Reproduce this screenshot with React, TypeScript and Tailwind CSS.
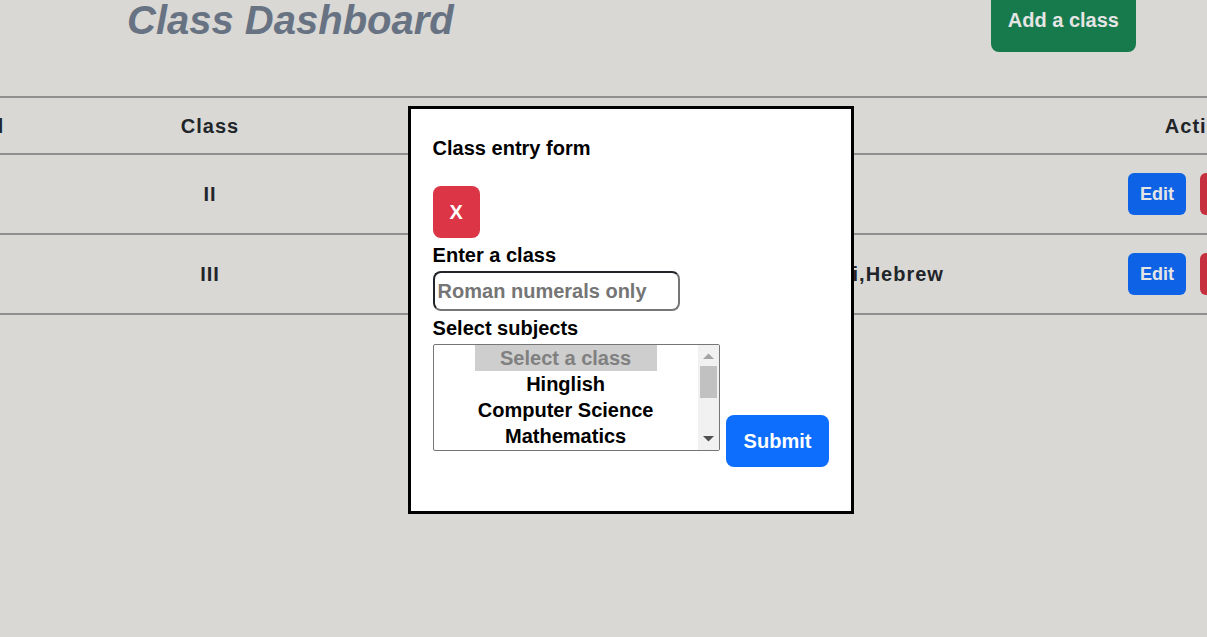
import React from "react";

const rows = [
  { id: "1", name: "II", subjects: "Hinglish" },
  { id: "2", name: "III", subjects: "English,French,Hindi,Hebrew" },
];

const subjects = [
  "Hinglish",
  "Computer Science",
  "Mathematics",
  "Tamil",
  "Hebrew",
  "Physics",
  "Chemistry",
  "Biology",
  "History",
  "Geography",
  "Economics",
];

function ClassTable() {
  return (
    <div className="flex justify-center">
      <table className="w-[calc(100%+240px)] shrink-0 table-fixed border-collapse text-center text-xl font-bold tracking-wider text-[#212529]">
        <colgroup>
          <col className="w-[188px]" />
          <col className="w-[284px]" />
          <col />
          <col className="w-[248px]" />
        </colgroup>
        <thead>
          <tr className="h-[57px] border-y-2 border-[#908e8f]">
            <th>Serial</th>
            <th>Class</th>
            <th className="pl-[152px]">Subjects</th>
            <th className="pl-1">Actions</th>
          </tr>
        </thead>
        <tbody>
          {rows.map((row) => (
            <tr key={row.id} className="h-20 border-b-2 border-[#908e8f]">
              <td>{row.id}</td>
              <td>{row.name}</td>
              <td className="pl-[152px] whitespace-nowrap">{row.subjects}</td>
              <td>
                <div className="flex justify-center gap-3.5 text-lg tracking-normal text-[#e5e5e5]">
                  <button type="button" className="rounded-md bg-[#0d62e5] px-3 py-[7px]">
                    Edit
                  </button>
                  <button type="button" className="rounded-md bg-[#c6303e] px-3 py-[7px]">
                    Delete
                  </button>
                </div>
              </td>
            </tr>
          ))}
        </tbody>
      </table>
    </div>
  );
}

function ScrollBar() {
  return (
    <div aria-hidden="true" className="flex w-[21px] flex-col items-center bg-[#f1f1f1]">
      <svg className="h-[21px] w-[21px]" viewBox="0 0 21 21">
        <path d="M5 14h11l-5.5-5.5z" fill="#a3a3a3" />
      </svg>
      <div className="h-8 w-[17px] bg-[#c1c1c1]" />
      <svg className="mt-auto h-[21px] w-[21px]" viewBox="0 0 21 21">
        <path d="M5 7h11l-5.5 5.5z" fill="#505050" />
      </svg>
    </div>
  );
}

function ClassForm() {
  return (
    <form
      role="dialog"
      aria-labelledby="form-title"
      onSubmit={(e) => e.preventDefault()}
      className="border-3 border-black bg-white px-[22px] pt-6 pb-11 text-xl leading-[30px] font-bold text-black"
    >
      <h2 id="form-title">Class entry form</h2>
      <button type="button" className="mt-[23px] block rounded-lg bg-[#dc3545] px-[17px] py-[11px] text-white">
        X
      </button>
      <label htmlFor="class-name" className="mt-0.5 block">
        Enter a class
      </label>
      <input
        id="class-name"
        type="text"
        placeholder="Roman numerals only"
        className="mt-px block h-10 w-[247px] rounded-lg border-2 border-t-[#212529] border-r-[#767676] border-b-[#767676] border-l-[#212529] px-[3px] placeholder:text-[#757575]"
      />
      <label htmlFor="subjects" className="mt-0.5 block">
        Select subjects
      </label>
      <div className="flex items-start gap-1.5">
        <div className="mt-px flex h-[107px] w-[287px] overflow-hidden rounded-xs border border-[#767676]">
          <select
            id="subjects"
            multiple
            size={4}
            defaultValue={[""]}
            className="min-w-0 flex-1 overflow-y-scroll px-[41px] text-center"
          >
            <option value="" disabled className="h-[26px] pt-0.5 font-bold">
              Select a class
            </option>
            {subjects.map((s) => (
              <option key={s} value={s} className="h-[26px] pt-0.5 font-bold">
                {s}
              </option>
            ))}
          </select>
          <ScrollBar />
        </div>
        <button type="submit" className="mt-[72px] rounded-lg bg-[#0d6efd] px-[18px] py-[11px] text-white">
          Submit
        </button>
      </div>
    </form>
  );
}

export default function App() {
  return (
    <div className="min-h-screen overflow-hidden bg-[#d9d8d4] font-['Liberation_Sans',sans-serif]">
      <header className="flex items-start justify-between pr-[71px] pb-11 pl-[127px]">
        <h1 className="text-[40px] leading-10 font-bold text-[#677283] italic">Class Dashboard</h1>
        <button
          type="button"
          className="rounded-b-lg bg-[#177a4c] px-[17px] pt-[5px] pb-[17px] text-xl leading-[30px] font-bold text-[#e5e5e5]"
        >
          Add a class
        </button>
      </header>
      <ClassTable />
      <div className="fixed inset-0 flex items-start justify-center pt-[106px] pl-[55px]">
        <ClassForm />
      </div>
    </div>
  );
}
